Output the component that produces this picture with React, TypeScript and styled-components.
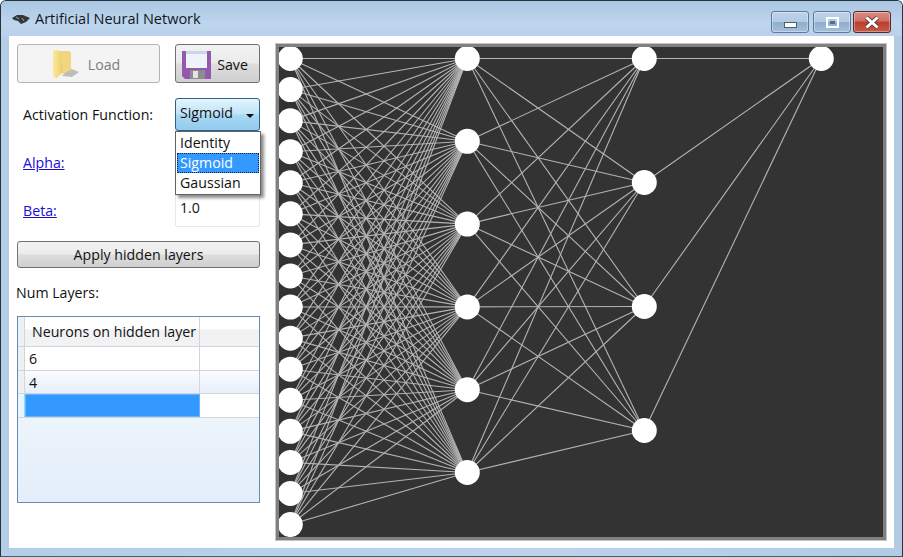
import React from "react"
import styled, { createGlobalStyle } from "styled-components"

const GlobalStyle = createGlobalStyle`
  html, body {
    margin: 0;
    padding: 0;
    background: #fff;
  }
  body {
    font-family: "Open Sans", "Noto Sans", sans-serif;
    font-size: 14.2px;
    color: #111;
  }
`

const Window = styled.div`
  width: 903px;
  height: 557px;
  box-sizing: border-box;
  border: 1px solid #24343f;
  border-bottom-color: #1e6f86;
  border-radius: 6px 6px 0 0;
  background: linear-gradient(to right, #b4cee8 0%, #bcd3ea 60%, #b2cbe4 100%);
  display: flex;
  flex-direction: column;
  padding: 0 8px 8px;
  overflow: hidden;
`

const TitleBar = styled.div`
  height: 35px;
  flex: none;
  display: flex;
  align-items: center;
  gap: 5px;
  margin: 0 -8px;
  padding-left: 11px;
  padding-right: 11px;
  background: linear-gradient(to bottom, #a9c6e2 0%, #bdd5ed 60%, #b9d1ea 100%);
`

const Title = styled.span`
  font-size: 14.5px;
  color: #10181f;
  flex: 1;
`

const WinButtons = styled.div`
  display: flex;
  gap: 2px;
  align-self: flex-start;
  margin-top: 10px;
`

const WinButton = styled.div<{ $close?: boolean; $w: number; $after?: number }>`
  width: ${(p) => p.$w}px;
  height: 22px;
  margin-right: ${(p) => p.$after ?? 0}px;
  box-sizing: border-box;
  border: 1px solid ${(p) => (p.$close ? "#5a2530" : "#5f7a99")};
  border-radius: 3px;
  display: flex;
  align-items: center;
  justify-content: center;
  box-shadow: inset 0 0 0 1px rgba(255, 255, 255, 0.35);
  background: ${(p) =>
    p.$close
      ? "linear-gradient(to bottom, #dc8d80 0%, #d27064 45%, #b8402c 50%, #c65a46 100%)"
      : "linear-gradient(to bottom, #bcd1e8 0%, #b4cbe4 48%, #8fadcc 52%, #a6c0dc 100%)"};
`

const Client = styled.div`
  flex: 1;
  background: #fff;
  padding: 8px;
  display: flex;
  gap: 16px;
  min-height: 0;
`

const Side = styled.div`
  width: 243px;
  flex: none;
  display: flex;
  flex-direction: column;
  position: relative;
`

const TopRow = styled.div`
  display: flex;
  justify-content: space-between;
  height: 39px;
`

const ImgButton = styled.div<{ $disabled?: boolean; $w: number; $gap: number }>`
  width: ${(p) => p.$w}px;
  box-sizing: border-box;
  border: 1px solid ${(p) => (p.$disabled ? "#b4b4b4" : "#707070")};
  border-radius: 3px;
  padding: 1px 5px 0 0;
  display: flex;
  align-items: center;
  justify-content: center;
  gap: ${(p) => p.$gap}px;
  color: ${(p) => (p.$disabled ? "#7d7d7d" : "#111")};
  background: ${(p) =>
    p.$disabled
      ? "#f4f4f4"
      : "linear-gradient(to bottom, #f2f2f2 0%, #ebebeb 48%, #dddddd 52%, #cfcfcf 100%)"};
`

const FieldRow = styled.div<{ $top: number; $h: number }>`
  display: flex;
  justify-content: space-between;
  align-items: center;
  margin-top: ${(p) => p.$top}px;
  height: ${(p) => p.$h}px;
  padding-left: 6px;
`

const LinkLabel = styled.a`
  color: #1a0dd6;
  text-decoration: underline;
`

const Combo = styled.div`
  width: 85px;
  height: 33px;
  box-sizing: border-box;
  border: 1px solid #2c628b;
  border-radius: 3px;
  padding: 0 1px 4px 4px;
  display: flex;
  align-items: center;
  justify-content: space-between;
  background: linear-gradient(to bottom, #e3f4fc 0%, #bfe4f8 48%, #a8d8f4 52%, #92cbee 100%);
`

const Caret = styled.div`
  width: 0;
  height: 0;
  margin: 7px 4px 0 0;
  border-left: 4px solid transparent;
  border-right: 4px solid transparent;
  border-top: 4px solid #111;
`

const Popup = styled.div`
  position: absolute;
  left: 158px;
  top: 87px;
  width: 86px;
  box-sizing: border-box;
  border: 1px solid #646464;
  background: #fff;
  box-shadow: 3px 3px 3px rgba(0, 0, 0, 0.45);
  z-index: 2;
  padding: 1px;
`

const PopupItem = styled.div<{ $selected?: boolean }>`
  height: 20px;
  line-height: 20px;
  box-sizing: border-box;
  padding-left: 3px;
  color: ${(p) => (p.$selected ? "#fff" : "#111")};
  background: ${(p) => (p.$selected ? "#3399ff" : "transparent")};
  outline: ${(p) => (p.$selected ? "1px dotted #10223a" : "none")};
  outline-offset: -1px;
`

const TextInput = styled.div`
  width: 85px;
  height: 33px;
  box-sizing: border-box;
  border: 1px solid #e3e9ef;
  border-radius: 2px;
  padding: 0 4px 6px;
  display: flex;
  align-items: center;
`

const WideButton = styled.div`
  margin-top: 14px;
  height: 27px;
  flex: none;
  box-sizing: border-box;
  border: 1px solid #707070;
  border-radius: 3px;
  display: flex;
  align-items: center;
  justify-content: center;
  background: linear-gradient(to bottom, #f2f2f2 0%, #ebebeb 48%, #dddddd 52%, #cfcfcf 100%);
`

const NumLayers = styled.div`
  margin: 15px 0 0 -1px;
  height: 20px;
  line-height: 20px;
`

const Grid = styled.div`
  margin-top: 13px;
  height: 187px;
  box-sizing: border-box;
  border: 1px solid #688caf;
  background: linear-gradient(to bottom, #f8fbfe 0%, #e3eefa 100%);
  display: flex;
  flex-direction: column;
`

const GridRow = styled.div<{ $h: number; $bg: string }>`
  display: grid;
  grid-template-columns: 7px 175px 1fr;
  height: ${(p) => p.$h}px;
  box-sizing: border-box;
  flex: none;
  border-bottom: 1px solid #d5d5d5;
  background: ${(p) => p.$bg};
`

const RowHead = styled.div<{ $active?: boolean }>`
  background: ${(p) => (p.$active ? "#e6f5fd" : "#eef1f4")};
  border-right: 1px solid ${(p) => (p.$active ? "#8fdcfb" : "#d5d5d5")};
`

const Cell = styled.div<{ $selected?: boolean; $head?: boolean }>`
  box-sizing: border-box;
  padding-left: ${(p) => (p.$head ? "7px" : "4px")};
  display: flex;
  align-items: center;
  overflow: hidden;
  white-space: nowrap;
  border-right: 1px solid #d5d5d5;
  ${(p) => p.$selected && "background: #3399ff; border: 1px solid #66b2ff;"}
`

const EndCell = styled.div``

const NetPanel = styled.div`
  width: 610px;
  flex: none;
  height: 496px;
  box-sizing: border-box;
  border: 3px solid #808080;
  background: #333333;
  outline: 1px solid #c4c4c4;
  position: relative;
`

const NetSvg = styled.svg`
  display: block;
  width: 604px;
  height: 490px;
`

// network geometry, relative to the inside of the canvas
const OX = 279
const OY = 47

const spread = (n: number, x: number, step: number) =>
  Array.from({ length: n }, (_, i) => ({ x: x - OX, y: 58.5 + i * step - OY }))

const layers = [
  spread(16, 290.3, 31.07),
  spread(6, 467.3, 82.8),
  spread(4, 644.3, 124),
  spread(1, 821.3, 0),
]

const Network = () => (
  <NetSvg viewBox="0 0 604 490">
    {layers.slice(0, -1).map((layer, l) =>
      layer.map((a, i) =>
        layers[l + 1].map((b, j) => (
          <line
            key={`${l}-${i}-${j}`}
            x1={a.x}
            y1={a.y}
            x2={b.x}
            y2={b.y}
            stroke="#b4b4b4"
            strokeWidth="1.1"
          />
        ))
      )
    )}
    {layers.map((layer, l) =>
      layer.map((n, i) => (
        <circle key={`n-${l}-${i}`} cx={n.x} cy={n.y} r="12.5" fill="#fff" />
      ))
    )}
  </NetSvg>
)

const FolderIcon = () => (
  <svg width="28" height="32" viewBox="0 0 28 32">
    <defs>
      <linearGradient id="fold" x1="0" y1="0" x2="1" y2="0">
        <stop offset="0" stopColor="#fbe9a0" />
        <stop offset="1" stopColor="#eccb68" />
      </linearGradient>
    </defs>
    <path d="M17 20 L27 24 L20 29 L10 28 Z" fill="#bdbdbd" />
    <path d="M9 3 L17 3 L19 5 L19 22 L10 26 Z" fill="#f0d67e" />
    <path d="M1 2 L9 3 L11 24 L4 31 L1 28 Z" fill="url(#fold)" />
  </svg>
)

const FloppyIcon = () => (
  <svg width="29" height="29" viewBox="0 0 29 29">
    <path d="M0 1 H29 V29 H3 L0 26 Z" fill="#9558b0" />
    <rect x="4" y="1" width="21" height="17" fill="#eef3fa" />
    <rect x="4" y="1" width="21" height="3" fill="#c7d6e8" />
    <rect x="8" y="20" width="15" height="9" fill="#8d8d8d" />
    <rect x="11" y="21" width="5" height="7" fill="#e4e4e4" />
  </svg>
)

const AppIcon = () => (
  <svg width="18" height="10" viewBox="0 0 18 10">
    <path d="M0 4 L5 1 L11 1 L18 4 L14 8 L9 10 L6 7 L2 6 Z" fill="#33383c" />
    <path d="M4 3 L7 5 M10 4 L12 7" stroke="#9aa4ab" strokeWidth="1" />
  </svg>
)

const App: React.FC = () => (
  <>
    <GlobalStyle />
    <Window>
      <TitleBar>
        <AppIcon />
        <Title>Artificial Neural Network</Title>
        <WinButtons>
          <WinButton $w={38} $after={2}>
            <svg width="13" height="14" viewBox="0 0 13 14">
              <rect x="0.5" y="7.5" width="12" height="5" fill="#fff" stroke="#4c6078" />
            </svg>
          </WinButton>
          <WinButton $w={38}>
            <svg width="13" height="11" viewBox="0 0 13 11">
              <rect x="1" y="1" width="11" height="9" fill="none" stroke="#fff" strokeWidth="2" />
              <rect x="4" y="4" width="5" height="3" fill="#4c6e96" />
            </svg>
          </WinButton>
          <WinButton $w={38} $close>
            <svg width="16" height="13" viewBox="0 0 16 13">
              <path d="M2.5 1.5 L13.5 11.5 M13.5 1.5 L2.5 11.5" stroke="#5a3a3a" strokeWidth="4.5" />
              <path d="M2.5 1.5 L13.5 11.5 M13.5 1.5 L2.5 11.5" stroke="#fff" strokeWidth="3" />
            </svg>
          </WinButton>
        </WinButtons>
      </TitleBar>
      <Client>
        <Side>
          <TopRow>
            <ImgButton $w={143} $disabled $gap={8}>
              <FolderIcon />
              <span>Load</span>
            </ImgButton>
            <ImgButton $w={85} $gap={6}>
              <FloppyIcon />
              <span>Save</span>
            </ImgButton>
          </TopRow>
          <FieldRow $top={15} $h={33}>
            <span>Activation Function:</span>
            <Combo>
              <span>Sigmoid</span>
              <Caret />
            </Combo>
          </FieldRow>
          <FieldRow $top={15} $h={33}>
            <LinkLabel>Alpha:</LinkLabel>
            <TextInput />
          </FieldRow>
          <FieldRow $top={15} $h={33}>
            <LinkLabel>Beta:</LinkLabel>
            <TextInput>1.0</TextInput>
          </FieldRow>
          <Popup>
            <PopupItem>Identity</PopupItem>
            <PopupItem $selected>Sigmoid</PopupItem>
            <PopupItem>Gaussian</PopupItem>
          </Popup>
          <WideButton>Apply hidden layers</WideButton>
          <NumLayers>Num Layers:</NumLayers>
          <Grid>
            <GridRow $h={30} $bg="linear-gradient(to bottom, #ffffff 0%, #ffffff 40%, #f1f2f4 45%, #f1f2f4 100%)">
              <RowHead />
              <Cell $head>Neurons on hidden layer</Cell>
              <EndCell />
            </GridRow>
            <GridRow $h={24} $bg="#fff">
              <RowHead />
              <Cell>6</Cell>
              <EndCell />
            </GridRow>
            <GridRow $h={23} $bg="linear-gradient(to bottom, #fafcfe, #e6effa)">
              <RowHead />
              <Cell>4</Cell>
              <EndCell />
            </GridRow>
            <GridRow $h={24} $bg="#fff">
              <RowHead $active />
              <Cell $selected />
              <EndCell />
            </GridRow>
          </Grid>
        </Side>
        <NetPanel>
          <Network />
        </NetPanel>
      </Client>
    </Window>
  </>
)

export default App
